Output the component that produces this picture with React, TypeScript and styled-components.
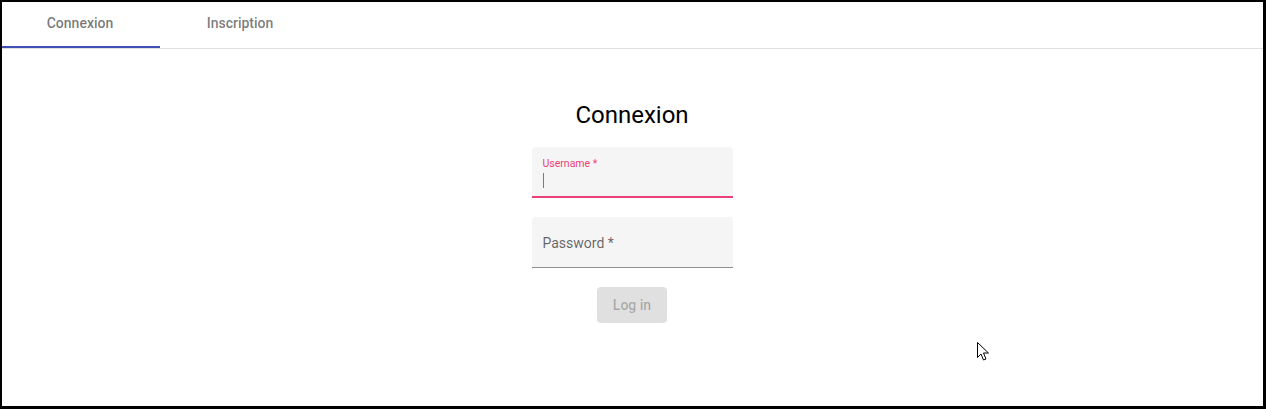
import React from "react";
import styled, { createGlobalStyle } from "styled-components";

const GlobalStyle = createGlobalStyle`
  html, body {
    margin: 0;
    padding: 0;
    background: #ffffff;
    font-family: Roboto, "Helvetica Neue", Arial, sans-serif;
  }
  * { box-sizing: border-box; }
`;

const Page = styled.div`
  width: 1266px;
  height: 409px;
  background: #fff;
  display: flex;
  flex-direction: column;
  overflow: hidden;
`;

const Frame = styled.div`
  position: fixed;
  top: 0;
  left: 0;
  width: 1266px;
  height: 409px;
  border-style: solid;
  border-color: #000;
  border-width: 2px 3px 3px 2px;
  pointer-events: none;
`;

const TabHeader = styled.div`
  display: flex;
  height: 49px;
  border-bottom: 1px solid rgba(0, 0, 0, 0.12);
`;

const Tab = styled.div<{ $active?: boolean }>`
  width: 160px;
  height: 48px;
  padding-bottom: 2px;
  display: flex;
  align-items: center;
  justify-content: center;
  font-family: Roboto, sans-serif;
  font-size: 14px;
  font-weight: 500;
  color: rgba(0, 0, 0, 0.87);
  opacity: 0.6;
  position: relative;
  &::after {
    content: "";
    display: ${(p) => (p.$active ? "block" : "none")};
    position: absolute;
    left: 0;
    right: 0;
    bottom: 0;
    height: 2px;
    background: #3f51b5;
  }
`;

const TabActive = styled(Tab)`
  opacity: 1;
  color: rgba(0, 0, 0, 0.54);
`;

const Body = styled.div`
  display: flex;
  flex-direction: column;
  align-items: center;
  padding-top: 50px;
  padding-right: 2px;
`;

const Title = styled.h2`
  margin: 0 0 16px;
  font-family: Roboto, sans-serif;
  font-size: 24px;
  font-weight: 400;
  line-height: 32px;
  color: #000;
`;

const Form = styled.form`
  display: flex;
  flex-direction: column;
  align-items: center;
  gap: 19px;
  width: 201px;
`;

const Field = styled.div<{ $focused?: boolean }>`
  width: 201px;
  height: 51px;
  background: #f5f5f5;
  border-radius: 4px 4px 0 0;
  border-bottom: ${(p) =>
    p.$focused ? "2px solid #ec407a" : "1px solid rgba(0, 0, 0, 0.42)"};
  padding: ${(p) => (p.$focused ? "11px 11px 0" : "0 11px")};
  display: flex;
  flex-direction: column;
  justify-content: ${(p) => (p.$focused ? "flex-start" : "center")};
  font-family: Roboto, sans-serif;
`;

const FloatLabel = styled.div`
  font-size: 10.5px;
  line-height: 12px;
  color: #ec407a;
`;

const Caret = styled.span`
  display: block;
  width: 1px;
  height: 15px;
  background: #ec407a;
  margin-top: 3px;
`;

const Placeholder = styled.div`
  font-size: 14px;
  line-height: 16px;
  color: rgba(0, 0, 0, 0.6);
  margin-top: 1px;
`;

const Button = styled.button`
  height: 36px;
  padding: 0 16px;
  border: none;
  border-radius: 4px;
  background: rgba(0, 0, 0, 0.12);
  color: rgba(0, 0, 0, 0.26);
  font-family: Roboto, sans-serif;
  font-size: 14px;
  font-weight: 500;
  line-height: 36px;
  cursor: default;
`;

const Pointer = styled.svg`
  position: fixed;
  left: 977px;
  top: 342px;
`;

export default function App() {
  return (
    <>
      <GlobalStyle />
      <Page>
        <TabHeader>
          <TabActive $active>Connexion</TabActive>
          <Tab>Inscription</Tab>
        </TabHeader>
        <Body>
          <Title>Connexion</Title>
          <Form onSubmit={(e) => e.preventDefault()}>
            <Field $focused>
              <FloatLabel>Username *</FloatLabel>
              <Caret />
            </Field>
            <Field>
              <Placeholder>Password *</Placeholder>
            </Field>
            <Button type="button" disabled>
              Log in
            </Button>
          </Form>
        </Body>
      </Page>
      <Frame />
      <Pointer width="13" height="20" viewBox="0 0 13 20">
        <path
          d="M0.5 0.5 L0.5 15.5 L4 12 L6.5 18 L9 17 L6.5 11 L11.5 11 Z"
          fill="#fff"
          stroke="#000"
          strokeWidth="1"
          strokeLinejoin="miter"
        />
      </Pointer>
    </>
  );
}
